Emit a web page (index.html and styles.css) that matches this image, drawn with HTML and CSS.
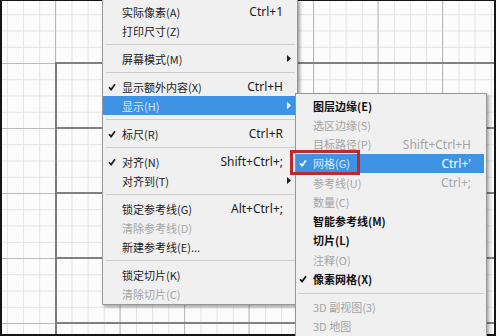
FILE: index.html
```html
<!DOCTYPE html>
<html lang="zh">

<head>
    <meta charset="UTF-8">
    <title>视图菜单</title>
    <link rel="stylesheet" href="styles.css">
</head>

<body>
    <div class="screen">
        <div class="canvas">
            <div class="slices"></div>
        </div>

        <div class="menu main-menu">
            <div class="item"><span class="mark"></span><span class="label">实际像素(A)</span><span class="key">Ctrl+1</span></div>
            <div class="item"><span class="mark"></span><span class="label">打印尺寸(Z)</span></div>
            <div class="sep"></div>
            <div class="item has-sub"><span class="mark"></span><span class="label">屏幕模式(M)</span><svg class="arrow" viewBox="0 0 4 7"><path d="M0 0L4 3.5L0 7z"/></svg></div>
            <div class="sep"></div>
            <div class="item"><span class="mark"><svg class="tick" viewBox="0 0 8 8"><path d="M1 4.3L3.1 6.6L7 1.3"/></svg></span><span class="label">显示额外内容(X)</span><span class="key">Ctrl+H</span></div>
            <div class="item has-sub active"><span class="mark"></span><span class="label">显示(H)</span><svg class="arrow" viewBox="0 0 4 7"><path d="M0 0L4 3.5L0 7z"/></svg></div>
            <div class="sep"></div>
            <div class="item"><span class="mark"><svg class="tick" viewBox="0 0 8 8"><path d="M1 4.3L3.1 6.6L7 1.3"/></svg></span><span class="label">标尺(R)</span><span class="key">Ctrl+R</span></div>
            <div class="sep"></div>
            <div class="item"><span class="mark"><svg class="tick" viewBox="0 0 8 8"><path d="M1 4.3L3.1 6.6L7 1.3"/></svg></span><span class="label">对齐(N)</span><span class="key">Shift+Ctrl+;</span></div>
            <div class="item has-sub"><span class="mark"></span><span class="label">对齐到(T)</span><svg class="arrow" viewBox="0 0 4 7"><path d="M0 0L4 3.5L0 7z"/></svg></div>
            <div class="sep"></div>
            <div class="item"><span class="mark"></span><span class="label">锁定参考线(G)</span><span class="key">Alt+Ctrl+;</span></div>
            <div class="item disabled"><span class="mark"></span><span class="label">清除参考线(D)</span></div>
            <div class="item"><span class="mark"></span><span class="label">新建参考线(E)...</span></div>
            <div class="sep"></div>
            <div class="item"><span class="mark"></span><span class="label">锁定切片(K)</span></div>
            <div class="item disabled"><span class="mark"></span><span class="label">清除切片(C)</span></div>
        </div>

        <div class="menu sub-menu">
            <div class="item strong"><span class="mark"></span><span class="label">图层边缘(E)</span></div>
            <div class="item disabled"><span class="mark"></span><span class="label">选区边缘(S)</span></div>
            <div class="item disabled"><span class="mark"></span><span class="label">目标路径(P)</span><span class="key">Shift+Ctrl+H</span></div>
            <div class="item active"><span class="mark"><svg class="tick" viewBox="0 0 8 8"><path d="M1 4.3L3.1 6.6L7 1.3"/></svg></span><span class="label">网格(G)</span><span class="key">Ctrl+'</span></div>
            <div class="item disabled"><span class="mark"></span><span class="label">参考线(U)</span><span class="key">Ctrl+;</span></div>
            <div class="item disabled"><span class="mark"></span><span class="label">数量(C)</span></div>
            <div class="item strong"><span class="mark"></span><span class="label">智能参考线(M)</span></div>
            <div class="item strong"><span class="mark"></span><span class="label">切片(L)</span></div>
            <div class="item disabled"><span class="mark"></span><span class="label">注释(O)</span></div>
            <div class="item strong"><span class="mark"><svg class="tick" viewBox="0 0 8 8"><path d="M1 4.3L3.1 6.6L7 1.3"/></svg></span><span class="label">像素网格(X)</span></div>
            <div class="sep"></div>
            <div class="item disabled"><span class="mark"></span><span class="label">3D 副视图(3)</span></div>
            <div class="item disabled"><span class="mark"></span><span class="label">3D 地图</span></div>
        </div>

        <div class="callout"></div>
    </div>
</body>

</html>
```

FILE: styles.css
```css
body {
    margin: 0;
    background-color: #fbfbfb;
    font-family: "Noto Sans CJK SC", "Noto Sans", sans-serif;
}

.screen {
    position: relative;
    width: 500px;
    height: 336px;
    overflow: hidden;
}

/* photoshop document with grid */
.canvas {
    position: relative;
    width: 492px;
    height: 333px;
    border-left: 2px solid #151515;
    border-right: 2px solid #151515;
    border-top: 1px solid #151515;
    border-bottom: 2px solid #151515;
    background-color: #fcfcfc;
    background-image:
        linear-gradient(to right, #b9b9b9 1px, transparent 1px),
        linear-gradient(to bottom, #b9b9b9 1px, transparent 1px),
        linear-gradient(to right, #e2e2e2 1px, transparent 1px),
        linear-gradient(to bottom, #e2e2e2 1px, transparent 1px);
    background-size:
        64.5px 100%,
        100% 65px,
        16.125px 100%,
        100% 16.25px;
    background-position:
        53px 0,
        0 62px,
        5px 0,
        0 13.25px;
}

.slices {
    position: absolute;
    left: 53px;
    top: 61px;
    right: 0;
    bottom: 0;
    border-left: 2px solid #7c7c7c;
    background-image: linear-gradient(to bottom, #808080 2px, transparent 2px);
    background-size: 100% 65px;
}

/* menus */
.menu {
    position: absolute;
    box-sizing: border-box;
    background-color: #f0f0f1;
    border: 1px solid #979797;
    box-shadow: 2px 2px 3px rgba(0, 0, 0, 0.35);
    color: #1c1c1c;
}

.main-menu {
    left: 102px;
    top: -1px;
    width: 196px;
    padding: 2px 2px 1px 0;
}

.sub-menu {
    left: 295px;
    top: 93px;
    width: 192px;
    padding: 2px 2px 2px 0;
}

.item {
    display: flex;
    align-items: center;
    height: 19px;
    padding: 0 12px 0 5px;
    font-size: 11px;
    white-space: nowrap;
}

.sub-menu .item {
    height: 19.25px;
    padding: 0 13px 0 3px;
}

.item.has-sub {
    padding-right: 4px;
}

.mark {
    display: flex;
    align-items: center;
    width: 14px;
    flex-shrink: 0;
}

.tick {
    width: 8px;
    height: 8px;
}

.tick path {
    fill: none;
    stroke: currentColor;
    stroke-width: 1.7;
}

.label {
    flex: 1;
}

.key {
    font-family: "Noto Sans", sans-serif;
    font-size: 12px;
}

.arrow {
    width: 4px;
    height: 7px;
    fill: currentColor;
}

.item.disabled {
    color: #a4a4a4;
}

.item.strong {
    color: #111;
    font-weight: 600;
}

.item.active {
    background-color: #3f93e4;
    color: #ffffff;
}

.item.active .label {
    color: #d9e8f8;
}

.sep {
    height: 1px;
    margin: 4px 0 4px 3px;
    background-color: #cdcdcd;
}

.sub-menu .sep {
    margin-left: 2px;
}

/* red annotation box */
.callout {
    position: absolute;
    left: 290px;
    top: 150px;
    width: 70px;
    height: 25px;
    box-sizing: border-box;
    border: 3px solid #c3262d;
}
```
